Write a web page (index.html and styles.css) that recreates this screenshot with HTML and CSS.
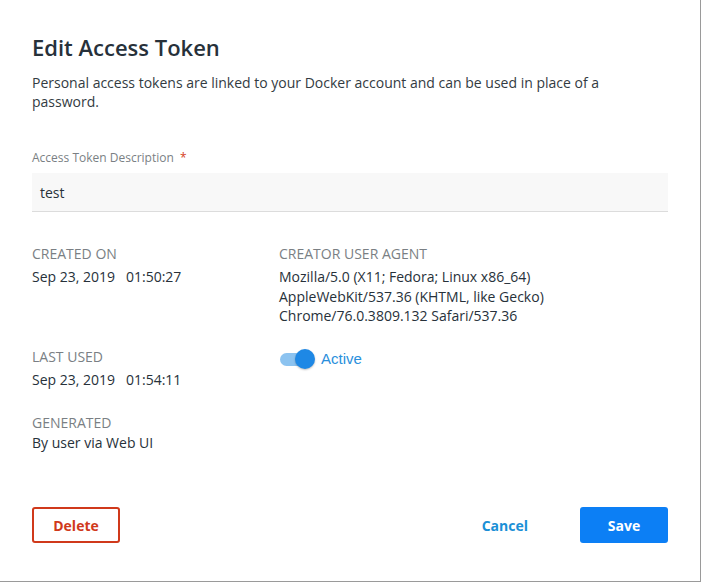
FILE: index.html
```html
<!DOCTYPE html>
<html>
<head>
<meta charset="utf-8">
<link rel="stylesheet" href="styles.css">
</head>
<body>
<div class="dialog">
  <h1 class="title">Edit Access Token</h1>
  <p class="intro">Personal access tokens are linked to your Docker account and can be used in place of a password.</p>
  <div class="field">
    <label class="field-label">Access Token Description <span class="req">*</span></label>
    <div class="input">test</div>
  </div>
  <div class="details">
    <div class="item">
      <div class="label">CREATED ON</div>
      <div class="value">Sep 23, 2019&nbsp;&nbsp;&nbsp;01:50:27</div>
    </div>
    <div class="item">
      <div class="label">CREATOR USER AGENT</div>
      <div class="value agent">Mozilla/5.0 (X11; Fedora; Linux x86_64)<br>AppleWebKit/537.36 (KHTML, like Gecko)<br>Chrome/76.0.3809.132 Safari/537.36</div>
    </div>
    <div class="item">
      <div class="label">LAST USED</div>
      <div class="value">Sep 23, 2019&nbsp;&nbsp;&nbsp;01:54:11</div>
    </div>
    <div class="item toggle-item">
      <span class="toggle"><span class="track"></span><span class="knob"></span></span>
      <span class="toggle-text">Active</span>
    </div>
    <div class="item gen">
      <div class="label">GENERATED</div>
      <div class="value">By user via Web UI</div>
    </div>
  </div>
  <div class="actions">
    <button class="btn btn-delete">Delete</button>
    <div class="right">
      <button class="btn btn-cancel">Cancel</button>
      <button class="btn btn-save">Save</button>
    </div>
  </div>
</div>
</body>
</html>
```
FILE: styles.css
```css
html, body {
  margin: 0;
  padding: 0;
  background: #ffffff;
}
body {
  font-family: "Open Sans", "Noto Sans", sans-serif;
  color: #27313a;
}
.dialog {
  box-sizing: border-box;
  width: 701px;
  height: 582px;
  border-right: 1px solid #9a9a9a;
  border-bottom: 1px solid #9a9a9a;
  padding: 32px 32px 0 32px;
  display: flex;
  flex-direction: column;
}
.title {
  margin: 0;
  font-size: 22px;
  font-weight: 600;
  line-height: 30px;
  color: #27313a;
}
.intro {
  margin: 11px 0 0 0;
  font-size: 14px;
  line-height: 19px;
  color: #333b42;
  width: 600px;
}
.field {
  margin-top: 39px;
}
.field-label {
  display: block;
  font-size: 12px;
  line-height: 16px;
  color: #7a7f84;
}
.req {
  color: #d5421c;
  margin-left: 3px;
}
.input {
  margin-top: 7px;
  height: 39px;
  box-sizing: border-box;
  background: #f8f8f8;
  border-bottom: 1px solid #dcdcdc;
  padding: 0 8px;
  font-size: 14px;
  line-height: 40px;
  color: #27313a;
}
.details {
  margin-top: 33px;
  display: grid;
  grid-template-columns: 247px 1fr;
  row-gap: 22px;
}
.label {
  font-size: 14px;
  line-height: 18px;
  color: #7a7f84;
}
.value {
  margin-top: 4px;
  font-size: 14px;
  line-height: 19.5px;
  color: #27313a;
}
.gen {
  margin-top: 3px;
}
.gen .value {
  margin-top: 1px;
}
.toggle-item {
  display: flex;
  align-items: center;
  align-self: start;
  height: 18px;
  margin-top: 2px;
}
.toggle {
  position: relative;
  width: 36px;
  height: 20px;
  display: inline-block;
}
.track {
  position: absolute;
  left: 1px;
  top: 4px;
  width: 32px;
  height: 13px;
  border-radius: 7px;
  background: #8cc3f0;
}
.knob {
  position: absolute;
  left: 16px;
  top: 0;
  width: 20px;
  height: 20px;
  border-radius: 50%;
  background: #1e88e5;
  box-shadow: 0 1px 2px rgba(0,0,0,0.25);
}
.toggle-text {
  margin-left: 6px;
  font-family: "Liberation Sans", Arial, sans-serif;
  font-size: 15px;
  color: #2a8fdc;
}
.actions {
  margin-top: auto;
  margin-bottom: 38px;
  display: flex;
  justify-content: space-between;
  align-items: center;
}
.right {
  display: flex;
  align-items: center;
  gap: 52px;
}
.btn {
  font-family: "Open Sans", "Noto Sans", sans-serif;
  font-weight: 700;
  font-size: 14px;
  height: 36px;
  width: 88px;
  border-radius: 3px;
  cursor: pointer;
  padding: 0;
}
.btn-delete {
  background: #ffffff;
  border: 2px solid #d0391b;
  color: #d0391b;
}
.btn-cancel {
  background: transparent;
  border: none;
  color: #1a8fd6;
  width: auto;
}
.btn-save {
  background: #0c7ff5;
  border: none;
  color: #ffffff;
}
```
